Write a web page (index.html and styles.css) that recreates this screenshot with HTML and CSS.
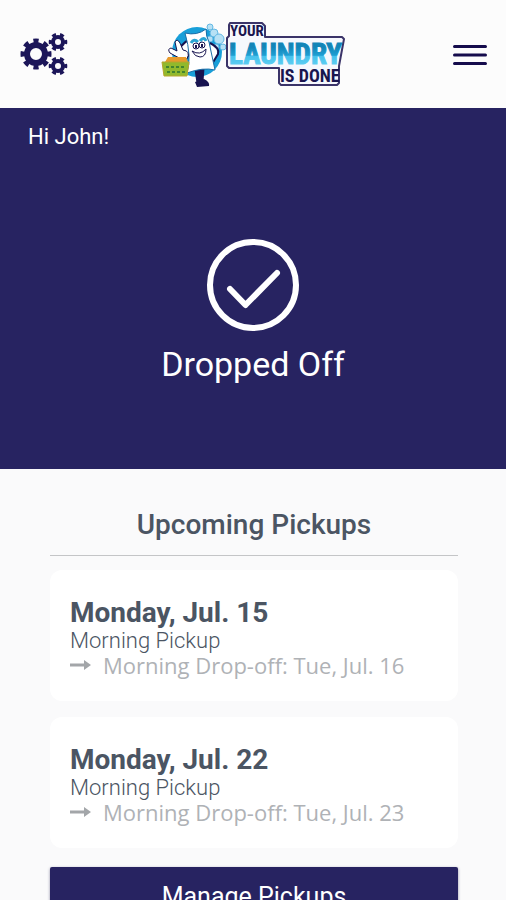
FILE: index.html
```html
<!DOCTYPE html>
<html lang="en">
<head>
    <meta charset="utf-8">
    <meta name="viewport" content="width=device-width, initial-scale=1">
    <title>Your Laundry Is Done</title>
    <link rel="stylesheet" href="styles.css">
</head>
<body>

<header class="topbar">
    <button class="icon-btn" aria-label="Settings">
        <svg width="48" height="46" viewBox="0 0 48 46" fill="none" stroke="#1c1659">
            <circle cx="16" cy="22" r="9" stroke-width="6"/>
            <circle cx="16" cy="22" r="13" stroke-width="5" pathLength="16" stroke-dasharray="1 1" stroke-dashoffset="0.5"/>
            <circle cx="38" cy="10" r="5" stroke-width="4"/>
            <circle cx="38" cy="10" r="7.5" stroke-width="3.6" pathLength="12" stroke-dasharray="1 1" stroke-dashoffset="0.5"/>
            <circle cx="38" cy="34" r="5" stroke-width="4"/>
            <circle cx="38" cy="34" r="7.5" stroke-width="3.6" pathLength="12" stroke-dasharray="1 1" stroke-dashoffset="0.5"/>
        </svg>
    </button>

    <a class="logo" href="#" aria-label="Your Laundry Is Done">
        <svg width="186" height="68" viewBox="0 0 186 68">
            <defs>
                <linearGradient id="blue" x1="0" y1="0" x2="0" y2="1">
                    <stop offset="0.3" stop-color="#1385b8"/>
                    <stop offset="0.54" stop-color="#1f9fd3"/>
                    <stop offset="0.56" stop-color="#45c1ec"/>
                    <stop offset="1" stop-color="#6fd6f6"/>
                </linearGradient>
            </defs>

            <!-- mascot -->
            <circle cx="36" cy="31" r="25" fill="#189fd9"/>
            <g fill="#b7e1f5" stroke="#64b9e4">
                <circle cx="49" cy="6" r="3"/>
                <circle cx="53" cy="12" r="4"/>
                <circle cx="58" cy="18" r="5"/>
                <circle cx="49" cy="18" r="3"/>
                <circle cx="62" cy="26" r="3"/>
                <circle cx="55" cy="26" r="3"/>
            </g>
            <path d="M36 48 L38 62 M41 47 L40 60" stroke="#17134f" stroke-width="5" fill="none"/>
            <path d="M34 61 L43 58 Q49 61 48 65 L36 66 Z" fill="#17134f"/>
            <path d="M29 18 Q18 24 16 34 L23 39 L29 33 M49 22 Q59 27 57 33 L51 43" fill="#fff" stroke="#17134f" stroke-width="2"/>
            <path d="M24 12 Q36 15 45 8 Q45 16 48 21 L54 49 Q42 46 26 52 Q31 36 24 12 Z" fill="#fff" stroke="#1c6fa8"/>
            <path d="M20 38 L9 32 Q6 28 10 27 L16 30 L14 21 Q16 17 19 22 L22 29 Q30 30 26 38 Z" fill="#fff" stroke="#17134f"/>
            <path d="M30 22 Q33 17 37 21 M39 20 Q43 15 45 20" stroke="#2aa6d4" stroke-width="3" fill="none"/>
            <g fill="#fff" stroke="#17134f">
                <ellipse cx="35" cy="25" rx="3" ry="3"/>
                <ellipse cx="41" cy="24" rx="3" ry="3"/>
                <path d="M31 30 Q39 35 45 28 Q45 36 39 36 Q34 36 31 30 Z"/>
            </g>
            <path d="M35 24 V27 M41 23 V26" stroke="#17134f" stroke-width="2"/>
            <path d="M4 41 L7 36 H25 L27 41 Z" fill="#e79a2d"/>
            <path d="M1 41 H28 L26 55 H3 Z" fill="#91b92c" stroke="#b8a52c"/>
            <path d="M5 46 H24 M6 51 H24" stroke="#42832f" stroke-width="2" stroke-dasharray="3 2"/>

            <!-- plate behind the words -->
            <path d="M69 2 H101 L104 5 V16 H181 L183 18 L178 45 V62 L176 64 H120 L118 62 V47 H68 L66 45 V17 L68 15 V4 Z" fill="#f6f8fd" stroke="#3b3469" stroke-width="2" stroke-linejoin="round"/>
            <text class="logo-small" x="69" y="15">YOUR</text>
            <text class="logo-big" x="68" y="43">LAUNDRY</text>
            <text class="logo-done" x="119" y="61">IS DONE</text>
        </svg>
    </a>

    <button class="icon-btn" aria-label="Menu">
        <svg width="34" height="22" viewBox="0 0 34 22" stroke="#150c4c" stroke-width="3" stroke-linecap="round">
            <path d="M1.5 2.5 H32.5 M1.5 11 H32.5 M1.5 19.5 H32.5"/>
        </svg>
    </button>
</header>

<section class="status">
    <p class="greeting">Hi John!</p>
    <div class="status-body">
        <svg width="94" height="94" viewBox="0 0 94 94" fill="none" stroke="#fff" stroke-width="6" stroke-linecap="round" stroke-linejoin="round">
            <circle cx="47" cy="47" r="43"/>
            <path d="M24 51 L39.5 67 L71 35"/>
        </svg>
        <h1>Dropped Off</h1>
    </div>
</section>

<main class="pickups">
    <h2>Upcoming Pickups</h2>

    <article class="card">
        <h3>Monday, Jul. 15</h3>
        <p class="pickup">Morning Pickup</p>
        <p class="dropoff">
            <svg width="21" height="12" viewBox="0 0 21 12">
                <path d="M0 4.5 H14 V1 L21 6 L14 11 V7.5 H0 Z" fill="#a3a6a9"/>
            </svg>
            Morning Drop-off: Tue, Jul. 16
        </p>
    </article>

    <article class="card">
        <h3>Monday, Jul. 22</h3>
        <p class="pickup">Morning Pickup</p>
        <p class="dropoff">
            <svg width="21" height="12" viewBox="0 0 21 12">
                <path d="M0 4.5 H14 V1 L21 6 L14 11 V7.5 H0 Z" fill="#a3a6a9"/>
            </svg>
            Morning Drop-off: Tue, Jul. 23
        </p>
    </article>

    <button class="manage">Manage Pickups</button>
</main>

</body>
</html>
```
FILE: styles.css
```css
* {
    box-sizing: border-box;
}
html {
    height: 100%;
    overflow: hidden;
}
body {
    margin: 0;
    height: 100%;
    overflow-y: auto;
    scrollbar-width: none;
    font-family: Roboto, sans-serif;
    background: #fafafb;
    color: #4b5563;
}
h1, h2, h3, p {
    margin: 0;
}
button {
    font-family: inherit;
    border: 0;
    cursor: pointer;
}
svg {
    display: block;
}

/* Top bar */
.topbar {
    display: grid;
    grid-template-columns: 1fr auto 1fr;
    align-items: center;
    height: 108px;
    padding: 2px 19px 0 20px;
    background: #fcfcfc;
}
.icon-btn {
    padding: 0;
    background: none;
    justify-self: start;
}
.icon-btn:last-child {
    justify-self: end;
}
.logo-small, .logo-big, .logo-done {
    font-family: "Roboto Condensed", "Liberation Sans Narrow", "Liberation Sans", sans-serif;
    font-weight: bold;
    fill: #1a154f;
}
.logo-small {
    font-size: 15px;
}
.logo-big {
    font-size: 29px;
    fill: url(#blue);
    stroke: url(#blue);
    stroke-width: 1px;
}
.logo-done {
    font-size: 18px;
}

/* Status panel */
.status {
    min-height: 361px;
    padding: 16px 28px;
    background: #272361;
    color: #fff;
}
.greeting {
    font-size: 22px;
    line-height: 26px;
}
.status-body {
    display: flex;
    flex-direction: column;
    align-items: center;
    padding-top: 88px;
}
.status-body h1 {
    margin-top: 8px;
    font-size: 34px;
    font-weight: 400;
    line-height: 48px;
}

/* Pickups */
.pickups {
    padding: 37px 48px 24px 50px;
}
.pickups h2 {
    margin-bottom: 14px;
    padding-bottom: 11px;
    border-bottom: 1px solid #c4c5c7;
    font-size: 28px;
    font-weight: 500;
    line-height: 38px;
    text-align: center;
}
.card {
    margin-bottom: 16px;
    padding: 26px 20px 24px;
    border-radius: 12px;
    background: #fff;
}
.card h3 {
    font-size: 28px;
    font-weight: 700;
    line-height: 33px;
}
.pickup {
    font-size: 22px;
    font-weight: 300;
    line-height: 24px;
}
.dropoff {
    display: flex;
    align-items: center;
    gap: 12px;
    font-family: "Open Sans", sans-serif;
    font-size: 22px;
    font-weight: 400;
    line-height: 24px;
    color: #afb2b6;
}
.manage {
    display: block;
    width: 100%;
    margin-top: 19px;
    padding: 13px;
    border-radius: 2px;
    background: #272361;
    color: #fff;
    font-size: 25px;
    line-height: 34px;
    box-shadow: 0 1px 3px #8d8ba5;
}
```
